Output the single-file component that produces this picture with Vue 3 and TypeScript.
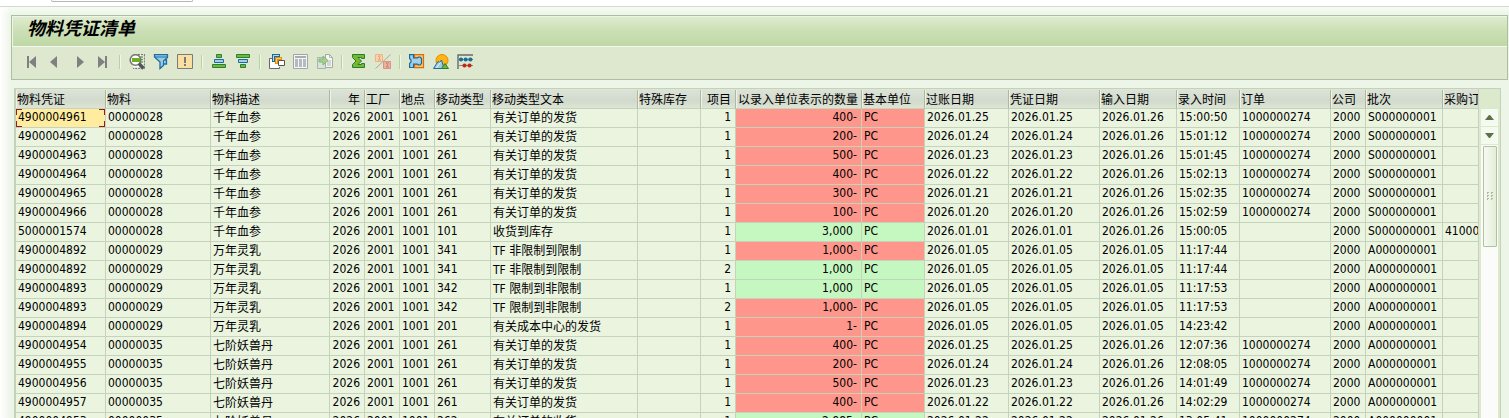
<script setup lang="ts">
interface Column {
  key: string
  label: string
  cls: string
}

interface Row {
  doc: string
  mat: string
  desc: string
  year: string
  plant: string
  loc: string
  mvt: string
  mvtText: string
  special: string
  item: string
  qty: string
  unit: string
  posted: string
  docDate: string
  entered: string
  time: string
  order: string
  company: string
  batch: string
  po: string
}

const columns: Column[] = [
  { key: 'doc', label: '物料凭证', cls: 'c-doc' },
  { key: 'mat', label: '物料', cls: 'c-mat' },
  { key: 'desc', label: '物料描述', cls: 'c-desc cjk' },
  { key: 'year', label: '年', cls: 'c-year num' },
  { key: 'plant', label: '工厂', cls: 'c-plant' },
  { key: 'loc', label: '地点', cls: 'c-loc' },
  { key: 'mvt', label: '移动类型', cls: 'c-mvt' },
  { key: 'mvtText', label: '移动类型文本', cls: 'c-mvttext cjk' },
  { key: 'special', label: '特殊库存', cls: 'c-special' },
  { key: 'item', label: '项目', cls: 'c-item num' },
  { key: 'qty', label: '以录入单位表示的数量', cls: 'c-qty num' },
  { key: 'unit', label: '基本单位', cls: 'c-unit' },
  { key: 'posted', label: '过账日期', cls: 'c-posted' },
  { key: 'docDate', label: '凭证日期', cls: 'c-docdate' },
  { key: 'entered', label: '输入日期', cls: 'c-entered' },
  { key: 'time', label: '录入时间', cls: 'c-time' },
  { key: 'order', label: '订单', cls: 'c-order' },
  { key: 'company', label: '公司', cls: 'c-company' },
  { key: 'batch', label: '批次', cls: 'c-batch' },
  { key: 'po', label: '采购订', cls: 'c-po' },
]

const ISSUE = '有关订单的发货'
const S = 'S000000001'
const A = 'A000000001'
const ORD = '1000000274'

function row(
  doc: string, mat: string, desc: string, mvt: string, mvtText: string, item: string, qty: string,
  posted: string, entered: string, time: string, order: string, batch: string, po = '',
): Row {
  return {
    doc, mat, desc, year: '2026', plant: '2001', loc: '1001', mvt, mvtText, special: '', item, qty,
    unit: 'PC', posted, docDate: posted, entered, time, order, company: '2000', batch, po,
  }
}

const rows: Row[] = [
  row('4900004961', '00000028', '千年血参', '261', ISSUE, '1', '400-', '2026.01.25', '2026.01.26', '15:00:50', ORD, S),
  row('4900004962', '00000028', '千年血参', '261', ISSUE, '1', '200-', '2026.01.24', '2026.01.26', '15:01:12', ORD, S),
  row('4900004963', '00000028', '千年血参', '261', ISSUE, '1', '500-', '2026.01.23', '2026.01.26', '15:01:45', ORD, S),
  row('4900004964', '00000028', '千年血参', '261', ISSUE, '1', '400-', '2026.01.22', '2026.01.26', '15:02:13', ORD, S),
  row('4900004965', '00000028', '千年血参', '261', ISSUE, '1', '300-', '2026.01.21', '2026.01.26', '15:02:35', ORD, S),
  row('4900004966', '00000028', '千年血参', '261', ISSUE, '1', '100-', '2026.01.20', '2026.01.26', '15:02:59', ORD, S),
  row('5000001574', '00000028', '千年血参', '101', '收货到库存', '1', '3,000', '2026.01.01', '2026.01.26', '15:00:05', '', S, '41000'),
  row('4900004892', '00000029', '万年灵乳', '341', 'TF 非限制到限制', '1', '1,000-', '2026.01.05', '2026.01.05', '11:17:44', '', A),
  row('4900004892', '00000029', '万年灵乳', '341', 'TF 非限制到限制', '2', '1,000', '2026.01.05', '2026.01.05', '11:17:44', '', A),
  row('4900004893', '00000029', '万年灵乳', '342', 'TF 限制到非限制', '1', '1,000', '2026.01.05', '2026.01.05', '11:17:53', '', A),
  row('4900004893', '00000029', '万年灵乳', '342', 'TF 限制到非限制', '2', '1,000-', '2026.01.05', '2026.01.05', '11:17:53', '', A),
  row('4900004894', '00000029', '万年灵乳', '201', '有关成本中心的发货', '1', '1-', '2026.01.05', '2026.01.05', '14:23:42', '', A),
  row('4900004954', '00000035', '七阶妖兽丹', '261', ISSUE, '1', '400-', '2026.01.25', '2026.01.26', '12:07:36', ORD, A),
  row('4900004955', '00000035', '七阶妖兽丹', '261', ISSUE, '1', '200-', '2026.01.24', '2026.01.26', '12:08:05', ORD, A),
  row('4900004956', '00000035', '七阶妖兽丹', '261', ISSUE, '1', '500-', '2026.01.23', '2026.01.26', '14:01:49', ORD, A),
  row('4900004957', '00000035', '七阶妖兽丹', '261', ISSUE, '1', '400-', '2026.01.22', '2026.01.26', '14:02:29', ORD, A),
  row('4900004953', '00000035', '七阶妖兽丹', '262', '有关订单的收货', '1', '2,985', '2026.01.22', '2026.01.26', '13:05:41', ORD, A),
]

function cellClass(col: Column, r: Row, index: number): Record<string, boolean> {
  const tinted = col.key === 'qty' || col.key === 'unit'
  const negative = r.qty.endsWith('-')
  return {
    neg: tinted && negative,
    pos: tinted && !negative,
    shift: col.key === 'qty' && !negative,
    active: index === 0 && col.key === 'doc',
  }
}

function cellText(col: Column, r: Row): string {
  return r[col.key as keyof Row]
}
</script>

<template>
  <div class="window">
    <div class="topbar">
      <input class="command" type="text" aria-label="命令" />
    </div>
    <main class="screen">
      <section class="panel">
        <header class="title"><h1>物料凭证清单</h1></header>
        <div class="toolbar" role="toolbar" aria-label="清单工具栏">
          <button type="button" aria-label="第一列">
            <svg viewBox="0 0 16 16"><path d="M4 2h2v12H4zM13 2v12L6 8z" fill="#808080" /></svg>
          </button>
          <button type="button" aria-label="上一列">
            <svg viewBox="0 0 16 16"><path d="M10 2v12L3 8z" fill="#808080" /></svg>
          </button>
          <button type="button" aria-label="下一列">
            <svg viewBox="0 0 16 16"><path d="M6 2v12l7-6z" fill="#808080" /></svg>
          </button>
          <button type="button" aria-label="最后一列">
            <svg viewBox="0 0 16 16"><path d="M3 2v12l7-6zM10 2h2v12h-2z" fill="#808080" /></svg>
          </button>
          <span class="sep"></span>
          <button type="button" aria-label="明细">
            <svg viewBox="0 0 16 16">
              <path d="M4 .5h11v13.500H4z" fill="#fbfcf8" />
              <path d="M9 .7h6.300v13.600H4" fill="none" stroke="#777" stroke-width="1.200" stroke-dasharray="2 1" />
              <path d="M11 3h3M12 5.500h2M12 8h2" stroke="#6aa929" stroke-width="1.600" />
              <circle cx="6.500" cy="6" r="5.300" fill="#fff" stroke="#777" stroke-width="1.600" />
              <path d="M3 4h8v4H3z" fill="#6fae22" />
              <path d="M10 9.500l4.500 5" stroke="#555" stroke-width="3.400" />
            </svg>
          </button>
          <button type="button" aria-label="过滤">
            <svg viewBox="0 0 16 16">
              <path d="M1.500.500h13v3l-3 2.500h2v4h-3v1.500l-3.500 3V8l-5.500-5z" fill="#9ccbe4" stroke="#1b6ea2" stroke-width="1.300" />
              <path d="M2 3h12M10.500 10V6.500" stroke="#1b6ea2" />
            </svg>
          </button>
          <button type="button" aria-label="检查">
            <svg viewBox="0 0 16 16">
              <path d="M.500.500h15v14H.500z" fill="#fae0a0" stroke="#7b7b7b" />
              <path d="M7 3h2v6H7zM7 10h2v2H7z" fill="#7b7b7b" />
            </svg>
          </button>
          <span class="sep"></span>
          <button type="button" aria-label="升序排序">
            <svg viewBox="0 0 16 16">
              <path d="M5.500.500h5v3h-5z" fill="#79b82c" stroke="#27803e" />
              <path d="M3.500 5.500h9v3h-9z" fill="#a3cfe9" stroke="#176d9d" />
              <path d="M1.500 10.500h13v3h-13z" fill="#79b82c" stroke="#27803e" />
            </svg>
          </button>
          <button type="button" aria-label="降序排序">
            <svg viewBox="0 0 16 16">
              <path d="M1.500.500h13v3h-13z" fill="#79b82c" stroke="#27803e" />
              <path d="M3.500 5.500h9v3h-9z" fill="#a3cfe9" stroke="#176d9d" />
              <path d="M5.500 10.500h5v3h-5z" fill="#79b82c" stroke="#27803e" />
            </svg>
          </button>
          <span class="sep"></span>
          <button type="button" aria-label="复制">
            <svg viewBox="0 0 16 16">
              <path d="M1 4h9v10H1z" fill="#fff" />
              <path d="M3 4.500H.500v10h10V13" fill="none" stroke="#666" />
              <path d="M3 0h8v3H6v5H3z" fill="#176d9d" />
              <path d="M4.500 7V1.500H10" fill="none" stroke="#b6dcef" />
              <path d="M6 3h7v3H9v4H6z" fill="#f08a00" />
              <path d="M7.500 9V4.500H12" fill="none" stroke="#fdcf6e" />
              <path d="M9.500 6.500h6v5h-6z" fill="#fff" stroke="#555" />
            </svg>
          </button>
          <button type="button" aria-label="选择布局">
            <svg viewBox="0 0 16 16">
              <path d="M.500.500h14v14H.500z" fill="#f6f7f3" stroke="#a2a5a8" />
              <path d="M2 2h11v2H2z" fill="#a7adb5" />
              <path d="M2 5h3v8H2zM6 5h3v8H6zM10 5h3v8h-3z" fill="#b4bac2" />
            </svg>
          </button>
          <button type="button" aria-label="导出">
            <svg viewBox="0 0 16 16">
              <path d="M.500 3.500h8v11h-8z" fill="#d7e5d8" stroke="#a9b4ae" />
              <path d="M8.500.500h4l3 3v10h-7z" fill="#f5f7f2" stroke="#a4a9a6" />
              <path d="M12.500.500v3h3M10 7h4M10 9h4M10 11h4" fill="none" stroke="#b1b5b1" />
              <path d="M2 5h4V2l5 4.500L6 11V8H2z" fill="#a9cf86" stroke="#83b487" />
            </svg>
          </button>
          <span class="sep"></span>
          <button type="button" aria-label="总计">
            <svg viewBox="0 0 16 16">
              <path d="M1.500.500h12v4h-3v-1H7l3.500 3.500L7 10.500h3.500v-1h3v4h-12v-3L5 7 1.500 3.500z" fill="#7ab829" stroke="#237e3c" />
            </svg>
          </button>
          <button type="button" aria-label="小计">
            <svg viewBox="0 0 16 16">
              <path d="M.500.500h7v7h-7z" fill="#fbd5aa" stroke="#eab58a" />
              <path d="M6 2H3l2 2-2 2h3" fill="none" stroke="#e5a27a" />
              <path d="M8.500 7.500h7v7h-7z" fill="#eeb09b" stroke="#dc9380" />
              <path d="M14 9h-3l2 2-2 2h3" fill="none" stroke="#cb8270" />
              <path d="M15.500.500l-15 14" stroke="#a7a9a3" />
            </svg>
          </button>
          <span class="sep"></span>
          <button type="button" aria-label="物料凭证">
            <svg viewBox="0 0 16 16">
              <path d="M5.500.600h9v13h-9v-3h5l1.500-1.500V5l-1.500-1.500h-5z" fill="#fcc65e" stroke="#e06a12" stroke-width="1.200" />
              <path d="M.600.600h3.900v3.400h4l1-1h1.500l1.500 1.500v5L11 11H9.500l-1-1h-4v3.500H.600v-4l1.400-1.500v-2L.600 4.500z" fill="#a3cfe9" stroke="#176d9d" stroke-width="1.200" />
            </svg>
          </button>
          <button type="button" aria-label="图形">
            <svg viewBox="0 0 16 16">
              <circle cx="9" cy="6.500" r="6" fill="#fdb515" stroke="#ef8500" />
              <path d="M.500 14.500L5 7.500l1.500 1L8.500 6l2.500 8.500z" fill="#9dcbe5" stroke="#176d9d" />
              <path d="M3.500 14l4-6" fill="none" stroke="#e7f3f8" />
              <path d="M8.500 14.500l3.500-5 3.500 5z" fill="#7ab829" stroke="#237e3c" />
            </svg>
          </button>
          <button type="button" aria-label="ABC 分析">
            <svg viewBox="0 0 16 16">
              <path d="M1 15V1h15" fill="none" stroke="#6b6b6b" stroke-width="1.400" />
              <path d="M2 5.500h14M2 11.500h14" stroke="#8b8b8b" />
              <g fill="#176d9d"><circle cx="4" cy="5.500" r="2.100" /><circle cx="8.700" cy="5.500" r="2.100" /><circle cx="13.400" cy="5.500" r="2.100" /></g>
              <g fill="#c02a12"><circle cx="7.500" cy="11.500" r="2.100" /><circle cx="12.500" cy="11.500" r="2.100" /></g>
            </svg>
          </button>
        </div>
      </section>

      <section class="grid">
        <div class="viewport">
          <table>
            <thead>
              <tr>
                <th v-for="col in columns" :key="col.key" :class="col.cls" scope="col">{{ col.label }}</th>
              </tr>
            </thead>
            <tbody>
              <tr v-for="(r, i) in rows" :key="i">
                <td v-for="col in columns" :key="col.key" :class="[col.cls, cellClass(col, r, i)]">{{ cellText(col, r) }}<span v-if="i === 0 && col.key === 'doc'" class="cursor"><i></i><i></i><i></i><i></i></span></td>
              </tr>
            </tbody>
          </table>
        </div>
        <div class="scrollbar">
          <button type="button" aria-label="向上滚动">
            <svg viewBox="0 0 9 5"><path d="M0 5h9L5 0H4z" fill="#5d7148" /></svg>
          </button>
          <button type="button" aria-label="向下滚动">
            <svg viewBox="0 0 9 5"><path d="M0 0h9L5 5H4z" fill="#5d7148" /></svg>
          </button>
          <div class="track">
            <div class="thumb">
              <svg viewBox="0 0 6 9">
                <path d="M0 0h2v1H1v1H0zM4 0h2v1H5v1H4zM0 3h2v1H1v1H0zM4 3h2v1H5v1H4zM0 6h2v1H1v1H0zM4 6h2v1H5v1H4z" fill="#a9bb98" />
              </svg>
            </div>
          </div>
        </div>
      </section>
    </main>
  </div>
</template>

<style>
body {
  overflow: hidden;
}
</style>

<style scoped>
.window {
  display: flex;
  flex-direction: column;
  height: 100vh;
  background: #fff;
  color: #000;
  font: 12px/16px 'DejaVu Sans Condensed', 'Noto Sans CJK SC', sans-serif;
}
.topbar {
  display: flex;
  align-items: flex-start;
  flex: none;
  height: 6px;
  padding-left: 51px;
  border-bottom: 1px solid #cfdccb;
}
.command {
  box-sizing: border-box;
  width: 142px;
  height: 2px;
  padding: 0;
  border: 1px solid #b5b5b5;
  border-top: 0;
  border-radius: 0 0 2px 2px;
  background: #fff;
}
.screen {
  display: flex;
  flex: 1;
  flex-direction: column;
  min-height: 0;
  padding: 8px 1px 0 11px;
  background: linear-gradient(to right, #fff 0, rgba(255, 255, 255, 0) 11px), linear-gradient(#f7fbf5, #edf4e8 8px);
}
.panel {
  flex: none;
  border: 1px solid #aebf9f;
  background: #dde8cf;
}
.title {
  display: flex;
  align-items: center;
  height: 31px;
  padding: 0 15px 4px;
  box-sizing: border-box;
  border-bottom: 1px solid #f4f9ef;
  background: linear-gradient(#dfedd0, #cbdfb5 50%, #bfd8a5);
  box-shadow: inset 1px 1px #edf5e5;
}
h1 {
  margin: 0;
  font: italic 700 18px/24px 'DejaVu Sans Condensed', 'Noto Sans CJK SC', sans-serif;
}
.toolbar {
  display: flex;
  align-items: center;
  height: 32px;
  padding: 0 0 2px 7px;
  box-sizing: border-box;
}
.toolbar button {
  display: flex;
  flex: none;
  align-items: center;
  justify-content: center;
  width: 24px;
  height: 24px;
  padding: 0;
  border: 0;
  background: none;
}
.toolbar svg {
  width: 16px;
  height: 16px;
}
.sep {
  flex: none;
  width: 1px;
  height: 14px;
  margin: 0 4px;
  border-right: 1px solid #f1f8ea;
  background: #b4d49b;
}
.grid {
  display: flex;
  flex: 1;
  min-height: 0;
  margin: 8px 7px 0 3px;
  border: 1px solid #c3d2b8;
  border-bottom: 0;
  border-left-width: 2px;
  background: #dce9cd;
}
.viewport {
  flex: 1;
  min-width: 0;
  overflow: hidden;
  padding-top: 1px;
  border-right: 1px solid #c5d3bc;
}
table {
  width: 100%;
  border-collapse: separate;
  border-spacing: 0;
  table-layout: fixed;
}
th,
td {
  box-sizing: border-box;
  height: 19px;
  padding: 0 0 2px 2px;
  overflow: hidden;
  border-right: 1px solid #c5d3bc;
  border-bottom: 1px solid #c5d3bc;
  background: #eaf4df;
  font-weight: 400;
  text-align: left;
  white-space: nowrap;
}
td.cjk {
  padding-top: 1px;
  padding-bottom: 1px;
}
th {
  padding: 2px 0 0 1px;
  border-right-color: #abb8a2;
  background: linear-gradient(#dce2d8, #d2dacc 60%, #dde5d6);
  box-shadow: inset 1px 0 #eef3ea;
}
.num {
  padding-right: 4px;
  text-align: right;
}
td.shift {
  padding-right: 8px;
}
.c-doc { width: 90px; }
.c-mat { width: 105px; }
.c-desc { width: 119px; }
.c-year, .c-plant, .c-loc, .c-item, .c-company { width: 35px; }
.c-mvt { width: 56px; }
.c-mvttext { width: 147px; }
.c-special, .c-unit, .c-time { width: 63px; }
.c-qty { width: 126px; }
.c-posted { width: 84px; }
.c-docdate, .c-order { width: 91px; }
.c-entered, .c-batch { width: 77px; }
th.c-po,
td.c-po { border-right: 0; }
th.c-qty { padding-right: 3px; }
td.neg {
  background: #ff968b;
}
td.pos {
  background: #c5f8c0;
}
td.active {
  position: relative;
  background: #ffec9e;
}
.cursor i {
  position: absolute;
  width: 5px;
  height: 5px;
  border: 0 solid #9b1c16;
}
.cursor i:nth-child(1) { top: 0; left: 0; border-width: 1px 0 0 1px; }
.cursor i:nth-child(2) { top: 0; right: 0; border-width: 1px 1px 0 0; }
.cursor i:nth-child(3) { bottom: 0; left: 0; border-width: 0 0 1px 1px; }
.cursor i:nth-child(4) { right: 0; bottom: 0; border-width: 0 1px 1px 0; }
.scrollbar {
  display: flex;
  flex: none;
  flex-direction: column;
  gap: 1px;
  width: 17px;
  padding: 20px 2px 0;
}
.scrollbar button {
  display: flex;
  align-items: center;
  justify-content: center;
  height: 17px;
  padding: 0;
  border: 0;
  background: #f5faf1;
}
.scrollbar button svg {
  width: 9px;
  height: 5px;
}
.track {
  flex: 1;
  padding: 1px 1px 0 2px;
  background: #fbfcfa;
}
.thumb {
  display: flex;
  align-items: center;
  justify-content: center;
  height: 99px;
  border: 1px solid #b2c1a6;
  border-radius: 1px;
  background: linear-gradient(to right, #f6faf2, #e3eed8);
}
.thumb svg {
  width: 6px;
  height: 9px;
}
</style>
